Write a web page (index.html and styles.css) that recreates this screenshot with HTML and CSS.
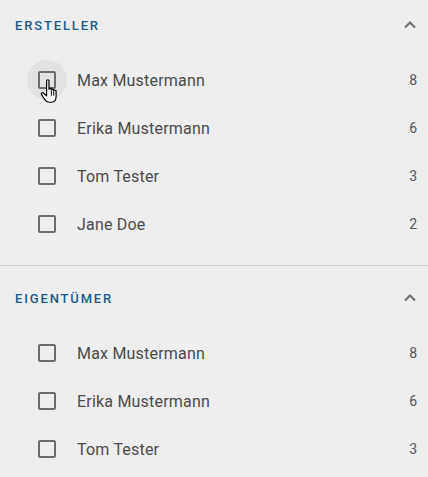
FILE: index.html
```html
<!DOCTYPE html>
<html lang="de">
<head>
<meta charset="utf-8">
<link rel="stylesheet" href="styles.css">
</head>
<body>
<div class="panel">
  <section class="group first">
    <div class="group-head">
      <span class="title">ERSTELLER</span>
      <svg class="chev" width="14" height="10" viewBox="0 0 14 10"><path d="M2 7.5 L7 2.5 L12 7.5" fill="none" stroke="#737373" stroke-width="2.2"/></svg>
    </div>
    <ul class="rows">
      <li class="row">
        <span class="cb-wrap hover"><span class="cb"></span>
          <svg class="cursor" width="24" height="28" viewBox="0 0 22 26"><path d="M6 2.5 C6 1.3 8.2 1.3 8.2 2.5 L8.2 10.5 C8.2 9.3 10.4 9.3 10.4 10.5 L10.4 11.3 C10.4 10.1 12.6 10.1 12.6 11.3 L12.6 12.1 C12.6 10.9 14.8 10.9 14.8 12.1 L14.8 17 C14.8 20.5 13.2 22.5 10.5 22.5 L8.3 22.5 C6.3 22.5 5.2 21.5 4.1 19.8 L1.2 15.2 C0.6 14.2 1.8 13 2.9 13.9 L6 16.5 Z" fill="#fff" stroke="#000" stroke-width="1.1" stroke-linejoin="round"/><path d="M10.4 11.8 V16.5 M12.6 12.5 V16.5" stroke="#000" stroke-width="0.9"/></svg>
        </span>
        <span class="name">Max Mustermann</span><span class="count">8</span>
      </li>
      <li class="row"><span class="cb-wrap"><span class="cb"></span></span><span class="name">Erika Mustermann</span><span class="count">6</span></li>
      <li class="row"><span class="cb-wrap"><span class="cb"></span></span><span class="name">Tom Tester</span><span class="count">3</span></li>
      <li class="row"><span class="cb-wrap"><span class="cb"></span></span><span class="name">Jane Doe</span><span class="count">2</span></li>
    </ul>
  </section>
  <section class="group second">
    <div class="group-head">
      <span class="title">EIGENTÜMER</span>
      <svg class="chev" width="14" height="10" viewBox="0 0 14 10"><path d="M2 7.5 L7 2.5 L12 7.5" fill="none" stroke="#737373" stroke-width="2.2"/></svg>
    </div>
    <ul class="rows">
      <li class="row"><span class="cb-wrap"><span class="cb"></span></span><span class="name">Max Mustermann</span><span class="count">8</span></li>
      <li class="row"><span class="cb-wrap"><span class="cb"></span></span><span class="name">Erika Mustermann</span><span class="count">6</span></li>
      <li class="row"><span class="cb-wrap"><span class="cb"></span></span><span class="name">Tom Tester</span><span class="count">3</span></li>
    </ul>
  </section>
</div>
</body>
</html>
```
FILE: styles.css
```css
html, body {
  margin: 0;
  padding: 0;
  background: #eeeeee;
  height: 100%;
  overflow: hidden;
}
body {
  font-family: Roboto, "Liberation Sans", sans-serif;
}
.panel {
  width: 428px;
}
.group.first {
  padding-bottom: 17px;
  border-bottom: 1px solid #d2d2d2;
}
.group.second {
  padding-top: 7px;
}
.group-head {
  height: 50px;
  display: flex;
  align-items: center;
  justify-content: space-between;
  padding: 0 11px 0 15px;
}
.title {
  font-size: 13px;
  font-weight: 500;
  letter-spacing: 1.85px;
  color: #1d5a8a;
}
.chev {
  display: block;
}
.rows {
  list-style: none;
  margin: 6px 0 0;
  padding: 0;
}
.row {
  height: 48px;
  display: flex;
  align-items: center;
  padding: 0 11px 0 27px;
}
.cb-wrap {
  position: relative;
  width: 40px;
  height: 40px;
  border-radius: 50%;
  display: flex;
  align-items: center;
  justify-content: center;
  flex: none;
}
.cb-wrap.hover {
  background: #e2e2e2;
}
.cb {
  width: 14px;
  height: 14px;
  border: 2px solid #6b6b6b;
  border-radius: 2px;
}
.cursor {
  position: absolute;
  left: 13px;
  top: 18px;
}
.name {
  margin-left: 10px;
  font-size: 16px;
  letter-spacing: 0.2px;
  color: #4a4a4a;
  flex: 1;
}
.count {
  font-size: 14px;
  color: #555;
}
```
